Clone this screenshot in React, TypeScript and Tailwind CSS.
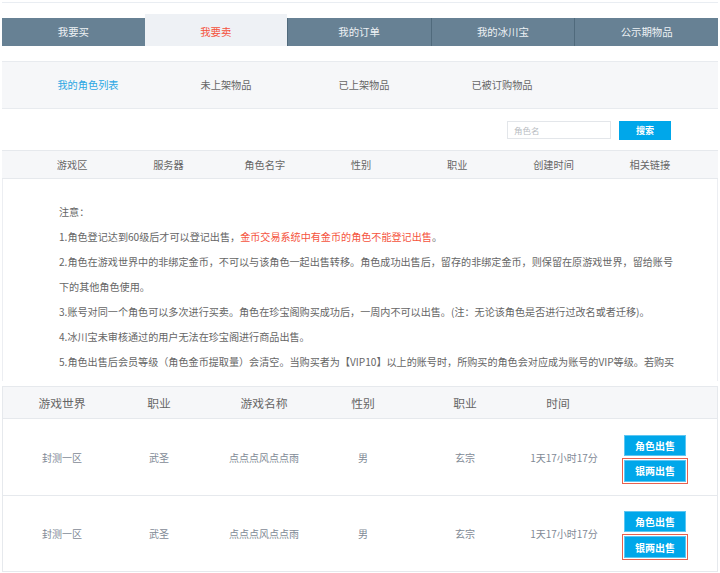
import React from "react";

const tabs = ["我要买", "我要卖", "我的订单", "我的冰川宝", "公示期物品"];
const subTabs = ["我的角色列表", "未上架物品", "已上架物品", "已被订购物品"];
const roleCols = ["游戏区", "服务器", "角色名字", "性别", "职业", "创建时间", "相关链接"];

const rows = [
  { world: "封测一区", job: "武圣", name: "点点点风点点雨", sex: "男", sect: "玄宗", time: "1天17小时17分" },
  { world: "封测一区", job: "武圣", name: "点点点风点点雨", sex: "男", sect: "玄宗", time: "1天17小时17分" },
];

const grid = "grid grid-cols-[118px_76px_134px_64px_140px_58px_126px]";

export default function App() {
  return (
    <div
      className="w-[720px] h-[573px] overflow-hidden bg-white px-[2px] pt-[2px]"
      style={{ fontFamily: '"Noto Sans CJK SC", "Liberation Sans", sans-serif' }}
    >
      {/* top nav */}
      <div className="border-t border-[#e9edf2] pt-[11px] flex items-end">
        {tabs.map((t, i) =>
          i === 1 ? (
            <div
              key={t}
              className="w-[142px] h-[32px] bg-[#eef1f5] flex items-center justify-center pt-[4px] text-[10.4px] text-[#f5533d]"
            >
              {t}
            </div>
          ) : (
            <div
              key={t}
              className="flex-1 h-[28px] bg-[#678194] border-l border-[#506a7c] first:border-l-0 flex items-center justify-center text-[10.4px] text-[#eef2f5]"
            >
              {t}
            </div>
          )
        )}
      </div>

      {/* sub nav */}
      <div className="mt-[15px] h-[48px] bg-[#f6f7f9] border-y border-[#e8ebef] flex items-center pl-[17px]">
        {subTabs.map((t, i) => (
          <div
            key={t}
            className={`w-[138px] text-center text-[10.2px] ${i === 0 ? "text-[#2ba6e3]" : "text-[#666]"}`}
          >
            {t}
          </div>
        ))}
      </div>

      {/* search */}
      <div className="h-[41px] flex items-start justify-end pt-[12px] pr-[47px] gap-[8px]">
        <div className="w-[104px] h-[18px] border border-[#e3e6ea] flex items-center px-[6px] text-[8.5px] text-[#b8bcc2]">
          角色名
        </div>
        <button className="w-[52px] h-[19px] bg-[#00a7ea] text-white text-[9px] font-bold flex items-center justify-center">
          搜索
        </button>
      </div>

      {/* role list header */}
      <div className="h-[29px] bg-[#f6f7f9] border-y border-[#e6e9ed] grid grid-cols-7 items-center pl-[22px] pr-[20px]">
        {roleCols.map((c) => (
          <div key={c} className="text-center text-[10.2px] text-[#666]">
            {c}
          </div>
        ))}
      </div>

      {/* notice */}
      <div className="h-[202px] overflow-hidden border-x border-[#eceef2] pt-[20px] pl-[56px]">
        <div className="text-[10.1px] leading-[25px] text-[#666] whitespace-nowrap">
          <p>注意：</p>
          <p>
            1.角色登记达到60级后才可以登记出售，
            <span className="text-[#f5533d]">金币交易系统中有金币的角色不能登记出售</span>。
          </p>
          <p>
            2.角色在游戏世界中的非绑定金币，不可以与该角色一起出售转移。角色成功出售后，留存的非绑定金币，则保留在原游戏世界，留给账号
            <br />
            下的其他角色使用。
          </p>
          <p>3.账号对同一个角色可以多次进行买卖。角色在珍宝阁购买成功后，一周内不可以出售。(注：无论该角色是否进行过改名或者迁移)。</p>
          <p>4.冰川宝未审核通过的用户无法在珍宝阁进行商品出售。</p>
          <p>5.角色出售后会员等级（角色金币提取量）会清空。当购买者为【VIP10】以上的账号时，所购买的角色会对应成为账号的VIP等级。若购买</p>
        </div>
      </div>

      {/* sale table */}
      <div className="mt-[5px] border border-[#e6e9ed]">
        <div className={`${grid} h-[32px] bg-[#f6f7f9] border-b border-[#e6e9ed] items-center text-[11.8px] text-[#666]`}>
          <div className="text-center">游戏世界</div>
          <div className="text-center">职业</div>
          <div className="text-center">游戏名称</div>
          <div className="text-center">性别</div>
          <div className="text-center">职业</div>
          <div className="flex justify-center pr-[12px]">时间</div>
          <div />
        </div>
        {rows.map((r, i) => (
          <div
            key={i}
            className={`${grid} h-[76px] items-center text-[10px] text-[#7f8a96] ${i > 0 ? "border-t border-[#e6e9ed]" : ""}`}
          >
            <div className="text-center">{r.world}</div>
            <div className="text-center">{r.job}</div>
            <div className="text-center">{r.name}</div>
            <div className="text-center">{r.sex}</div>
            <div className="text-center">{r.sect}</div>
            <div className="flex justify-center whitespace-nowrap">{r.time}</div>
            <div className="flex flex-col items-center gap-[4px] pt-[2px] pr-[2px]">
              <button className="w-[62px] h-[21px] bg-[#00a7ea] border border-[#5ec6f2] text-white text-[10px] font-bold">
                角色出售
              </button>
              <button className="w-[62px] h-[22px] bg-[#00a7ea] border border-[#5ec6f2] outline outline-1 outline-offset-1 outline-[#e8604d] text-white text-[10px] font-bold">
                银两出售
              </button>
            </div>
          </div>
        ))}
      </div>
    </div>
  );
}
